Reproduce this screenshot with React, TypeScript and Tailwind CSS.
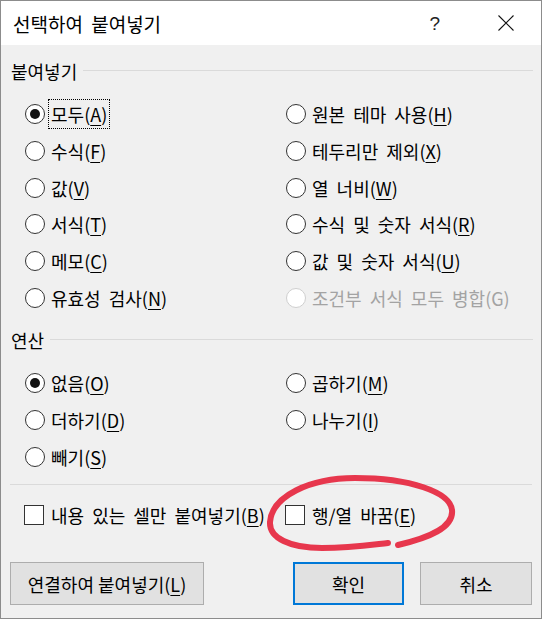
import React from 'react';

type Item = { text: string; mn?: string; checked?: boolean; disabled?: boolean; focus?: boolean };

const pasteLeft: Item[] = [
  { text: '모두', mn: 'A', checked: true, focus: true },
  { text: '수식', mn: 'F' },
  { text: '값', mn: 'V' },
  { text: '서식', mn: 'T' },
  { text: '메모', mn: 'C' },
  { text: '유효성 검사', mn: 'N' },
];

const pasteRight: Item[] = [
  { text: '원본 테마 사용', mn: 'H' },
  { text: '테두리만 제외', mn: 'X' },
  { text: '열 너비', mn: 'W' },
  { text: '수식 및 숫자 서식', mn: 'R' },
  { text: '값 및 숫자 서식', mn: 'U' },
  { text: '조건부 서식 모두 병합(G)', disabled: true },
];

const opLeft: Item[] = [
  { text: '없음', mn: 'O', checked: true },
  { text: '더하기', mn: 'D' },
  { text: '빼기', mn: 'S' },
];

const opRight: Item[] = [
  { text: '곱하기', mn: 'M' },
  { text: '나누기', mn: 'I' },
];

function Label({ text, mn }: { text: string; mn?: string }) {
  return (
    <>
      {text}
      {mn && (
        <>
          (<span className="underline underline-offset-[3px]">{mn}</span>)
        </>
      )}
    </>
  );
}

function Radio({ item }: { item: Item }) {
  return (
    <div className="h-[36.7px] flex items-center gap-[6px]">
      <span
        className={
          item.disabled
            ? 'w-[20px] h-[20px] rounded-full border border-[#cfcfcf] bg-white flex items-center justify-center shrink-0'
            : 'w-[20px] h-[20px] rounded-full border border-[#333333] bg-white flex items-center justify-center shrink-0'
        }
      >
        {item.checked && <span className="w-[10px] h-[10px] rounded-full bg-[#111111]" />}
      </span>
      <span
        className={
          item.focus
            ? 'outline-1 outline-dotted outline-black px-[2px] -ml-[2px] py-[5px]'
            : item.disabled
              ? 'text-[#a3a3a3]'
              : ''
        }
      >
        <Label text={item.text} mn={item.mn} />
      </span>
    </div>
  );
}

function Checkbox({ text, mn }: { text: string; mn: string }) {
  return (
    <div className="h-[30px] flex items-center gap-[7px]">
      <span className="w-[20px] h-[20px] border border-[#333333] bg-white shrink-0" />
      <span>
        <Label text={text} mn={mn} />
      </span>
    </div>
  );
}

function GroupHeader({ title }: { title: string }) {
  return (
    <div className="h-[24px] flex items-center pl-[10px] pr-[8px] gap-[6px]">
      <span>{title}</span>
      <span className="flex-1 h-px bg-[#dadada] -mt-[2px]" />
    </div>
  );
}

export default function App() {
  return (
    <div className="relative w-[543px] h-[622px] bg-white font-['Noto_Sans_CJK_KR',sans-serif] text-[18px] [word-spacing:4px] leading-none text-black">
      <div className="w-[542px] h-[619px] border border-[#8c8c8c] flex flex-col">
        {/* title bar */}
        <div className="h-[44px] bg-white flex items-center pl-[12px] shrink-0">
          <span className="text-[19px]">선택하여 붙여넣기</span>
          <span className="ml-auto mr-[58px] text-[19px] font-['Liberation_Sans',sans-serif] text-[#222222]">?</span>
          <svg width="16" height="16" viewBox="0 0 16 16" className="mr-[27px]">
            <path d="M0.5 0.5 L15.5 15.5 M15.5 0.5 L0.5 15.5" stroke="#111111" strokeWidth="1.1" />
          </svg>
        </div>

        {/* body */}
        <div className="flex-1 bg-[#f0f0f0] flex flex-col">
          <div className="mt-[14px]">
            <GroupHeader title="붙여넣기" />
          </div>
          <div className="mt-[13px] grid grid-cols-[261px_1fr] pl-[24px]">
            <div className="flex flex-col">
              {pasteLeft.map((it) => (
                <Radio key={it.text} item={it} />
              ))}
            </div>
            <div className="flex flex-col">
              {pasteRight.map((it) => (
                <Radio key={it.text} item={it} />
              ))}
            </div>
          </div>

          <div className="mt-[12px]">
            <GroupHeader title="연산" />
          </div>
          <div className="mt-[13px] grid grid-cols-[261px_1fr] pl-[24px]">
            <div className="flex flex-col">
              {opLeft.map((it) => (
                <Radio key={it.text} item={it} />
              ))}
            </div>
            <div className="flex flex-col">
              {opRight.map((it) => (
                <Radio key={it.text} item={it} />
              ))}
            </div>
          </div>

          <div className="mt-[9px] mx-[9px] h-px bg-[#dadada]" />

          <div className="mt-[15px] grid grid-cols-[261px_1fr] pl-[23px]">
            <Checkbox text="내용 있는 셀만 붙여넣기" mn="B" />
            <Checkbox text="행/열 바꿈" mn="E" />
          </div>

          <div className="mt-[32px] flex items-center px-[9px]">
            <button className="w-[194px] h-[43px] bg-[#e1e1e1] border border-[#adadad] flex items-center justify-center">
              <Label text="연결하여 붙여넣기" mn="L" />
            </button>
            <button className="ml-auto w-[111px] h-[43px] bg-[#e1e1e1] border-2 border-[#0078d7] flex items-center justify-center">
              확인
            </button>
            <button className="ml-[16px] w-[112px] h-[43px] bg-[#e1e1e1] border border-[#adadad] flex items-center justify-center">
              취소
            </button>
          </div>
        </div>
      </div>

      {/* red hand-drawn annotation */}
      <svg
        className="absolute left-[260px] top-[470px] pointer-events-none"
        width="200"
        height="90"
        viewBox="0 0 200 90"
      >
        <path
          d="M138 75 C168 68 194 58 192 40 C190 22 150 8 95 8 C50 8 12 26 10 52 C9 68 30 78 62 78 C90 78 110 75 128 73"
          fill="none"
          stroke="#e7374d"
          strokeWidth="6"
          strokeLinecap="round"
        />
      </svg>
    </div>
  );
}
